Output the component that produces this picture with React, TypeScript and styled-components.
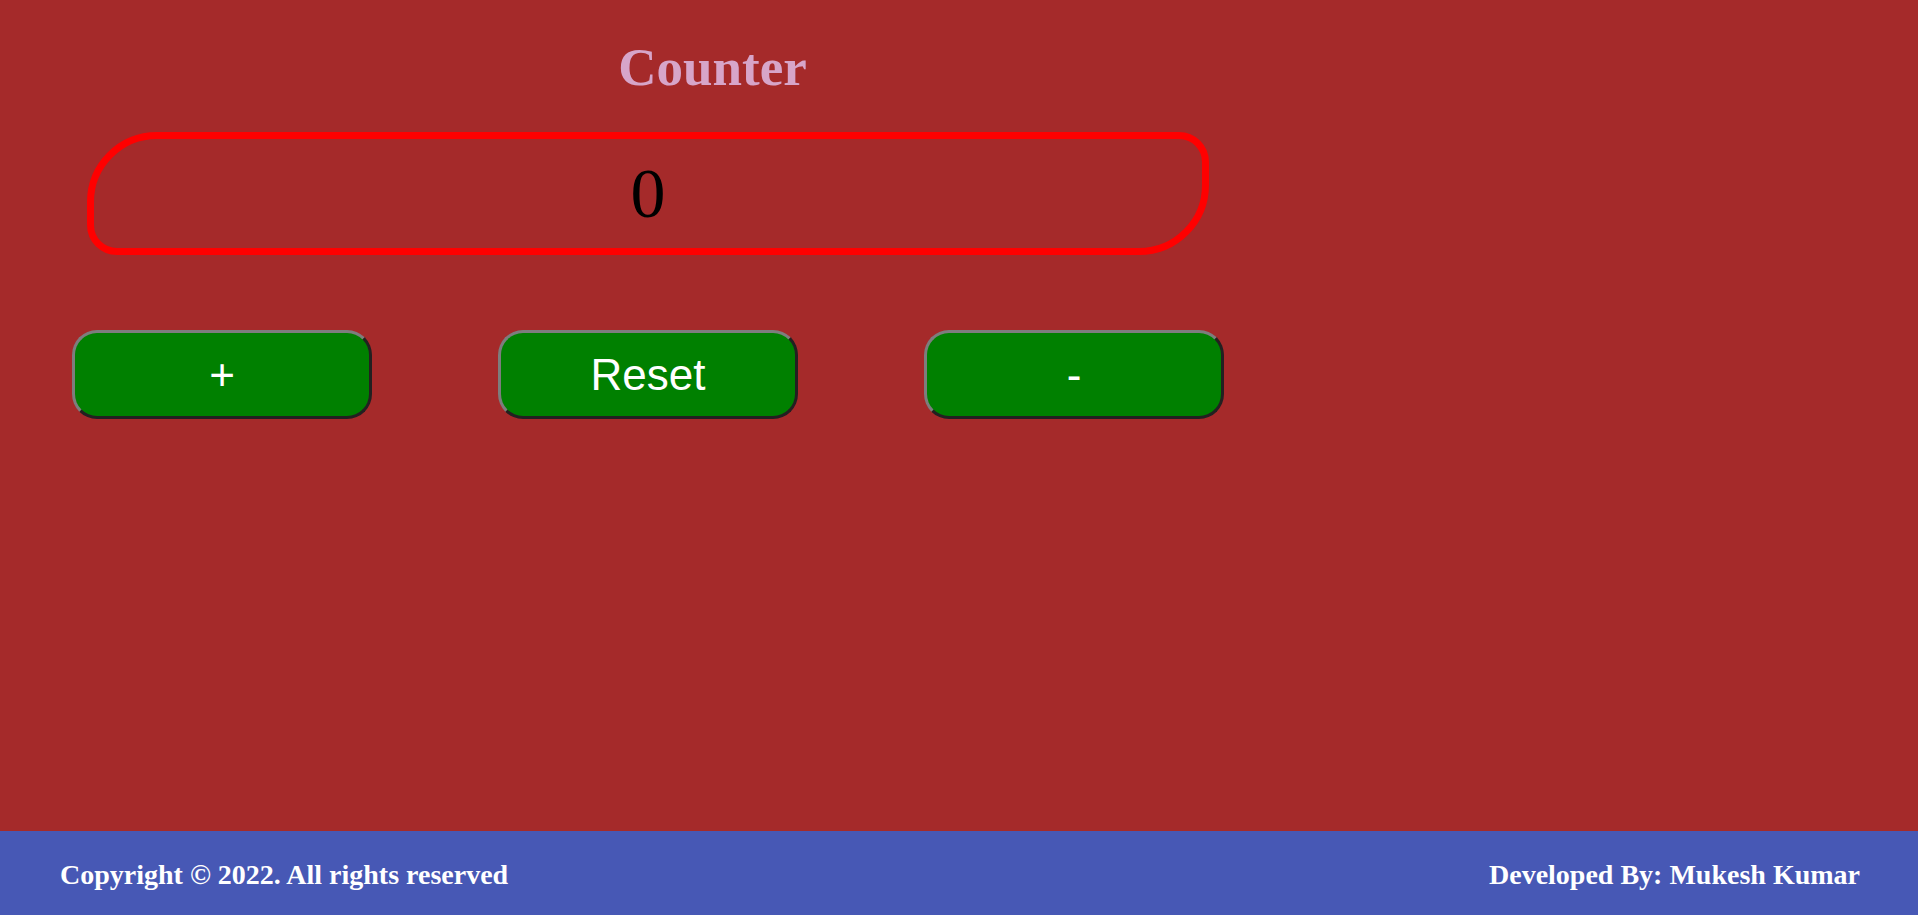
import React, { useState } from "react";
import styled, { createGlobalStyle } from "styled-components";

const GlobalStyle = createGlobalStyle`
  html, body {
    margin: 0;
    padding: 0;
    background: #a52a2a;
  }
  * { box-sizing: border-box; }
`;

const Page = styled.div`
  min-height: 100vh;
  display: flex;
  flex-direction: column;
  background: #a52a2a;
`;

const Main = styled.main`
  flex: 1;
  padding-left: 72px;
`;

const Column = styled.div`
  width: 1152px;
  display: flex;
  flex-direction: column;
`;

const Title = styled.h1`
  margin: 37px 0 0;
  padding-left: 129px;
  text-align: center;
  font-family: "Liberation Serif", "Times New Roman", serif;
  font-weight: bold;
  font-size: 53px;
  line-height: 60px;
  color: #d7a5c9;
`;

const Display = styled.div`
  margin: 35px 0 0 15px;
  width: 1122px;
  height: 123px;
  border: 7px solid #ff0000;
  border-radius: 70px 30px 70px 30px;
  display: flex;
  align-items: center;
  justify-content: center;
  font-family: "Liberation Serif", "Times New Roman", serif;
  font-size: 70px;
  line-height: 1;
  color: #000;
`;

const ButtonRow = styled.div`
  display: flex;
  gap: 126px;
  margin-top: 75px;
`;

const ActionButton = styled.button`
  width: 300px;
  height: 89px;
  background: #008000;
  color: #ffffff;
  border: 3px solid;
  border-color: #7d7d7d #232021 #232021 #7d7d7d;
  border-radius: 25px;
  font-family: "Liberation Sans", Arial, sans-serif;
  font-size: 44px;
  line-height: 1;
  padding: 0;
  cursor: pointer;
`;

const Footer = styled.footer`
  height: 84px;
  background: #4758b5;
  display: flex;
  align-items: center;
  justify-content: space-between;
  padding: 4px 58px 0 60px;
  font-family: "Liberation Serif", "Times New Roman", serif;
  font-weight: bold;
  font-size: 28px;
  color: #ffffff;
`;

const FooterText = styled.span``;

export default function App() {
  const [count, setCount] = useState(0);
  return (
    <Page>
      <GlobalStyle />
      <Main>
        <Column>
          <Title>Counter</Title>
          <Display>{count}</Display>
          <ButtonRow>
            <ActionButton onClick={() => setCount((c) => c + 1)}>+</ActionButton>
            <ActionButton onClick={() => setCount(0)}>Reset</ActionButton>
            <ActionButton onClick={() => setCount((c) => c - 1)}>-</ActionButton>
          </ButtonRow>
        </Column>
      </Main>
      <Footer>
        <FooterText>Copyright © 2022. All rights reserved</FooterText>
        <FooterText>Developed By: Mukesh Kumar</FooterText>
      </Footer>
    </Page>
  );
}
